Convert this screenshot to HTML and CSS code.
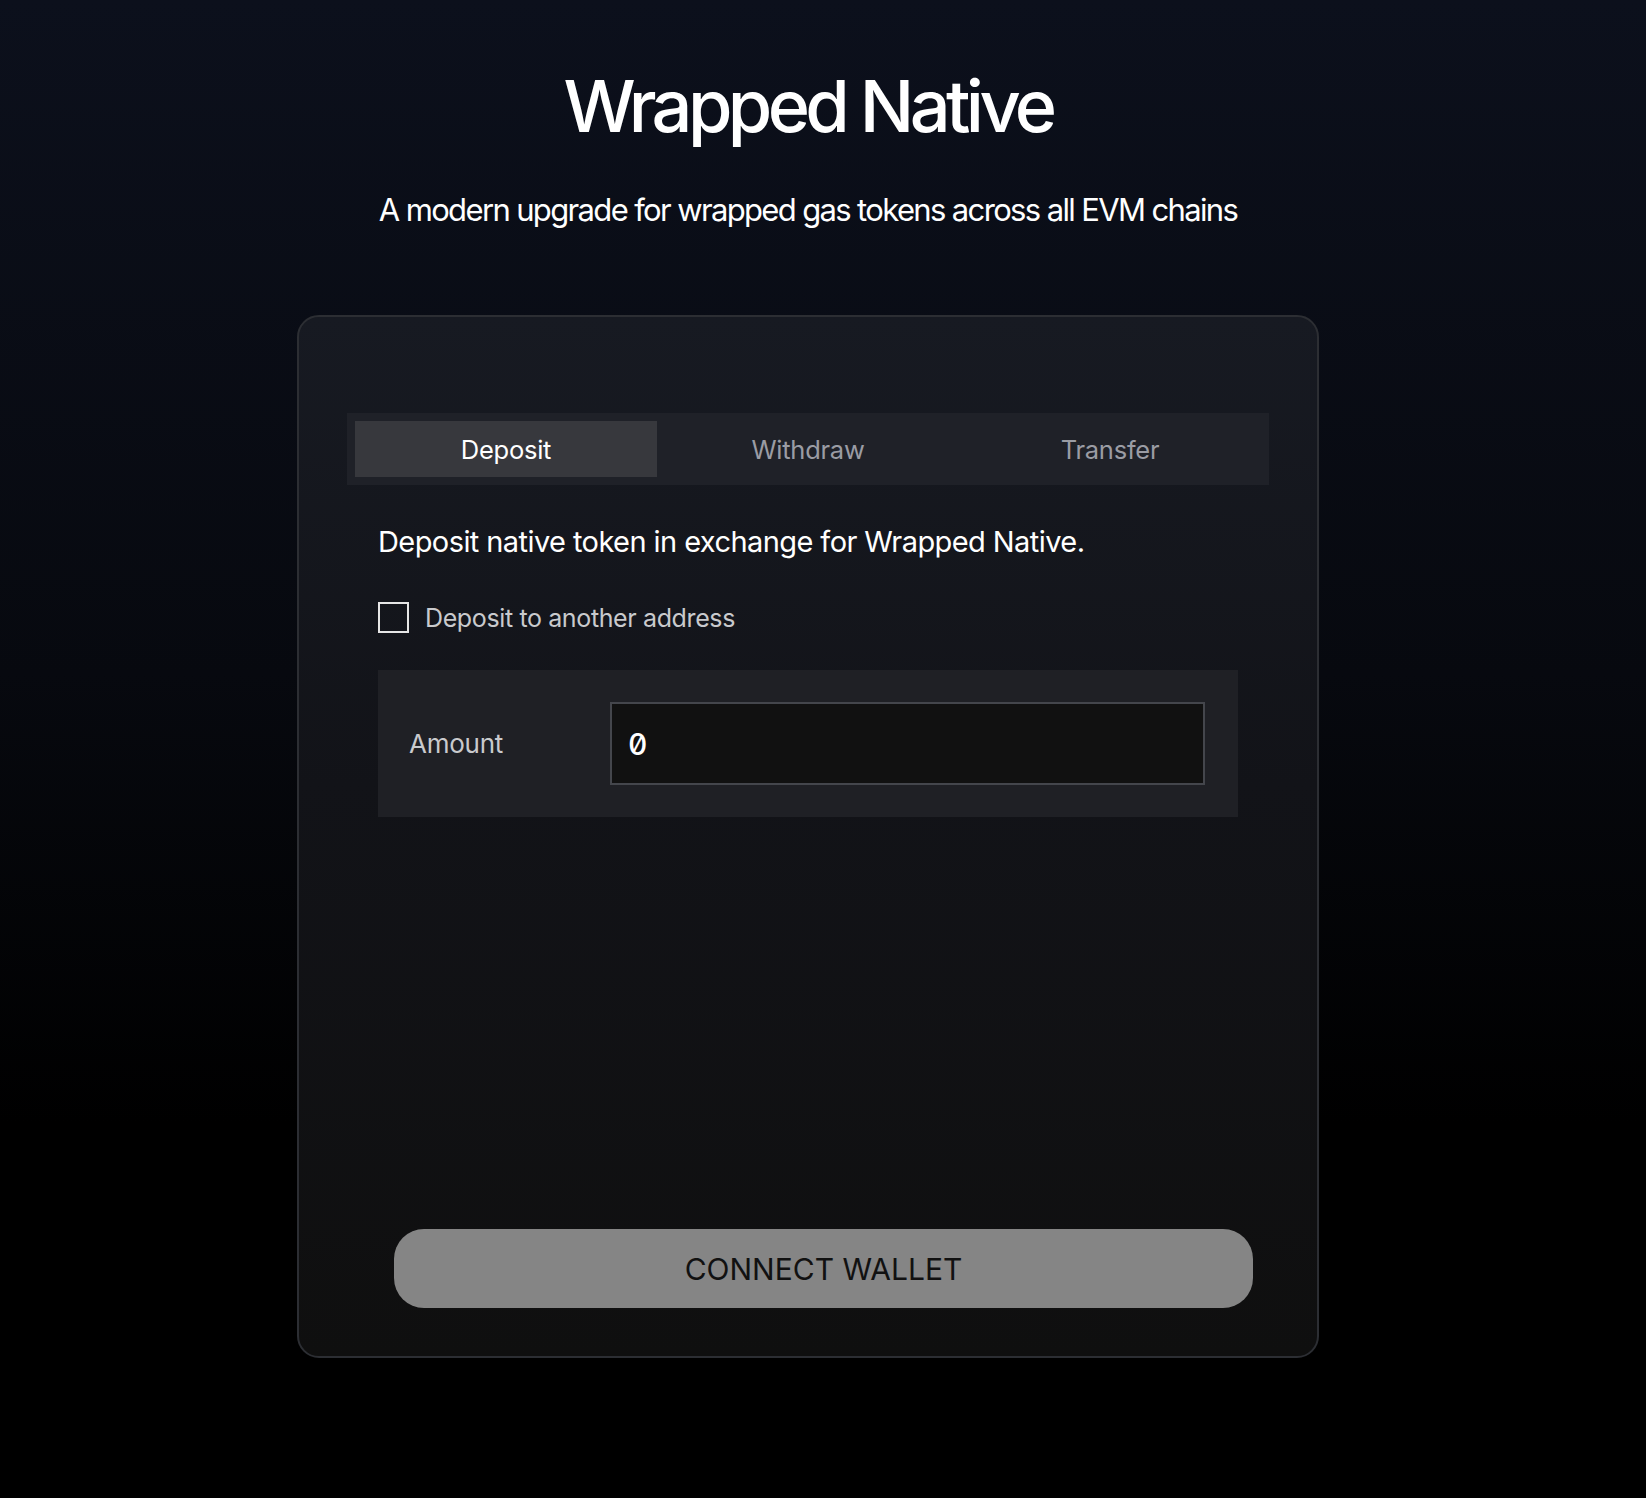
FILE: index.html
```html
<!DOCTYPE html>
<html lang="en">
<head>
    <meta charset="UTF-8">
    <meta name="viewport" content="width=device-width, initial-scale=1.0">
    <title>Wrapped Native</title>
    <link rel="stylesheet" href="styles.css">
</head>
<body>

<div class="page">
    <h1 class="title">Wrapped Native</h1>
    <p class="subtitle">A modern upgrade for wrapped gas tokens across all EVM chains</p>

    <div class="card">
        <div class="tabs">
            <button class="tab active">Deposit</button>
            <button class="tab">Withdraw</button>
            <button class="tab">Transfer</button>
        </div>

        <div class="tab-body">
            <p class="description">Deposit native token in exchange for Wrapped Native.</p>

            <label class="check-row">
                <input type="checkbox" class="checkbox">
                <span>Deposit to another address</span>
            </label>

            <div class="amount-panel">
                <label for="amount" class="amount-label">Amount</label>
                <input type="text" id="amount" class="amount-input" value="0">
            </div>
        </div>

        <div class="actions">
            <button class="connect-btn">CONNECT WALLET</button>
        </div>
    </div>
</div>

</body>
</html>
```

FILE: styles.css
```css
body {
    font-family: Inter, "Noto Sans", sans-serif;
    background: linear-gradient(to bottom, #0c101c 0%, #07090f 45%, #000 75%, #000 100%);
    margin: 0;
    padding: 0;
    min-height: 1498px;
    color: #fff;
}

.page {
    width: 1616px;
    padding-top: 70px;
    padding-bottom: 139px;
    display: flex;
    flex-direction: column;
    align-items: center;
}

.title {
    margin: 0;
    font-size: 72px;
    line-height: 1;
    font-weight: 500;
    letter-spacing: -0.064em;
}

.subtitle {
    margin: 52px 0 0;
    font-size: 31px;
    line-height: 1;
    letter-spacing: -0.053em;
}

.card {
    margin-top: 90px;
    width: 1022px;
    height: 1043px;
    box-sizing: border-box;
    padding: 96px 48px 48px;
    border: 2px solid #2c2e33;
    border-radius: 22px;
    background: linear-gradient(to bottom, #171a22 0%, #121318 45%, #0f0f0f 100%);
    display: flex;
    flex-direction: column;
}

.tabs {
    display: grid;
    grid-template-columns: 1fr 1fr 1fr;
    padding: 8px;
    background-color: #1f2128;
}

.tab {
    height: 56px;
    border: none;
    background: transparent;
    color: #9a9ca4;
    font-family: inherit;
    font-size: 25.5px;
    letter-spacing: -0.01em;
    cursor: pointer;
}

.tab.active {
    background-color: #37383d;
    color: #fff;
}

.tab-body {
    padding: 0 31px;
}

.description {
    margin: 42px 0 0;
    font-size: 29px;
    line-height: 1;
    letter-spacing: -0.02em;
}

.check-row {
    margin-top: 46px;
    display: flex;
    align-items: center;
    gap: 16px;
    color: #c9cacd;
    font-size: 25px;
    letter-spacing: -0.015em;
}

.checkbox {
    appearance: none;
    margin: 0;
    width: 31px;
    height: 31px;
    border: 2px solid #e6e6e6;
    background: transparent;
}

.amount-panel {
    margin-top: 37px;
    padding: 32px 33px 32px 31px;
    display: flex;
    align-items: center;
    background-color: #1f2025;
}

.amount-label {
    width: 201px;
    color: #c9cacd;
    font-size: 26px;
    letter-spacing: -0.01em;
}

.amount-input {
    flex: 1;
    height: 83px;
    box-sizing: border-box;
    padding: 0 16px;
    border: 2px solid #44464c;
    background-color: #111;
    color: #fff;
    font-family: Inter, monospace;
    font-variant-numeric: slashed-zero tabular-nums;
    font-size: 30px;
    font-weight: 500;
    outline: none;
}

.actions {
    margin-top: auto;
    padding: 0 16px 0 47px;
}

.connect-btn {
    width: 100%;
    height: 79px;
    border: none;
    border-radius: 30px;
    background-color: #858585;
    color: #111;
    font-family: inherit;
    font-size: 30px;
    letter-spacing: 0;
    cursor: pointer;
}
```
